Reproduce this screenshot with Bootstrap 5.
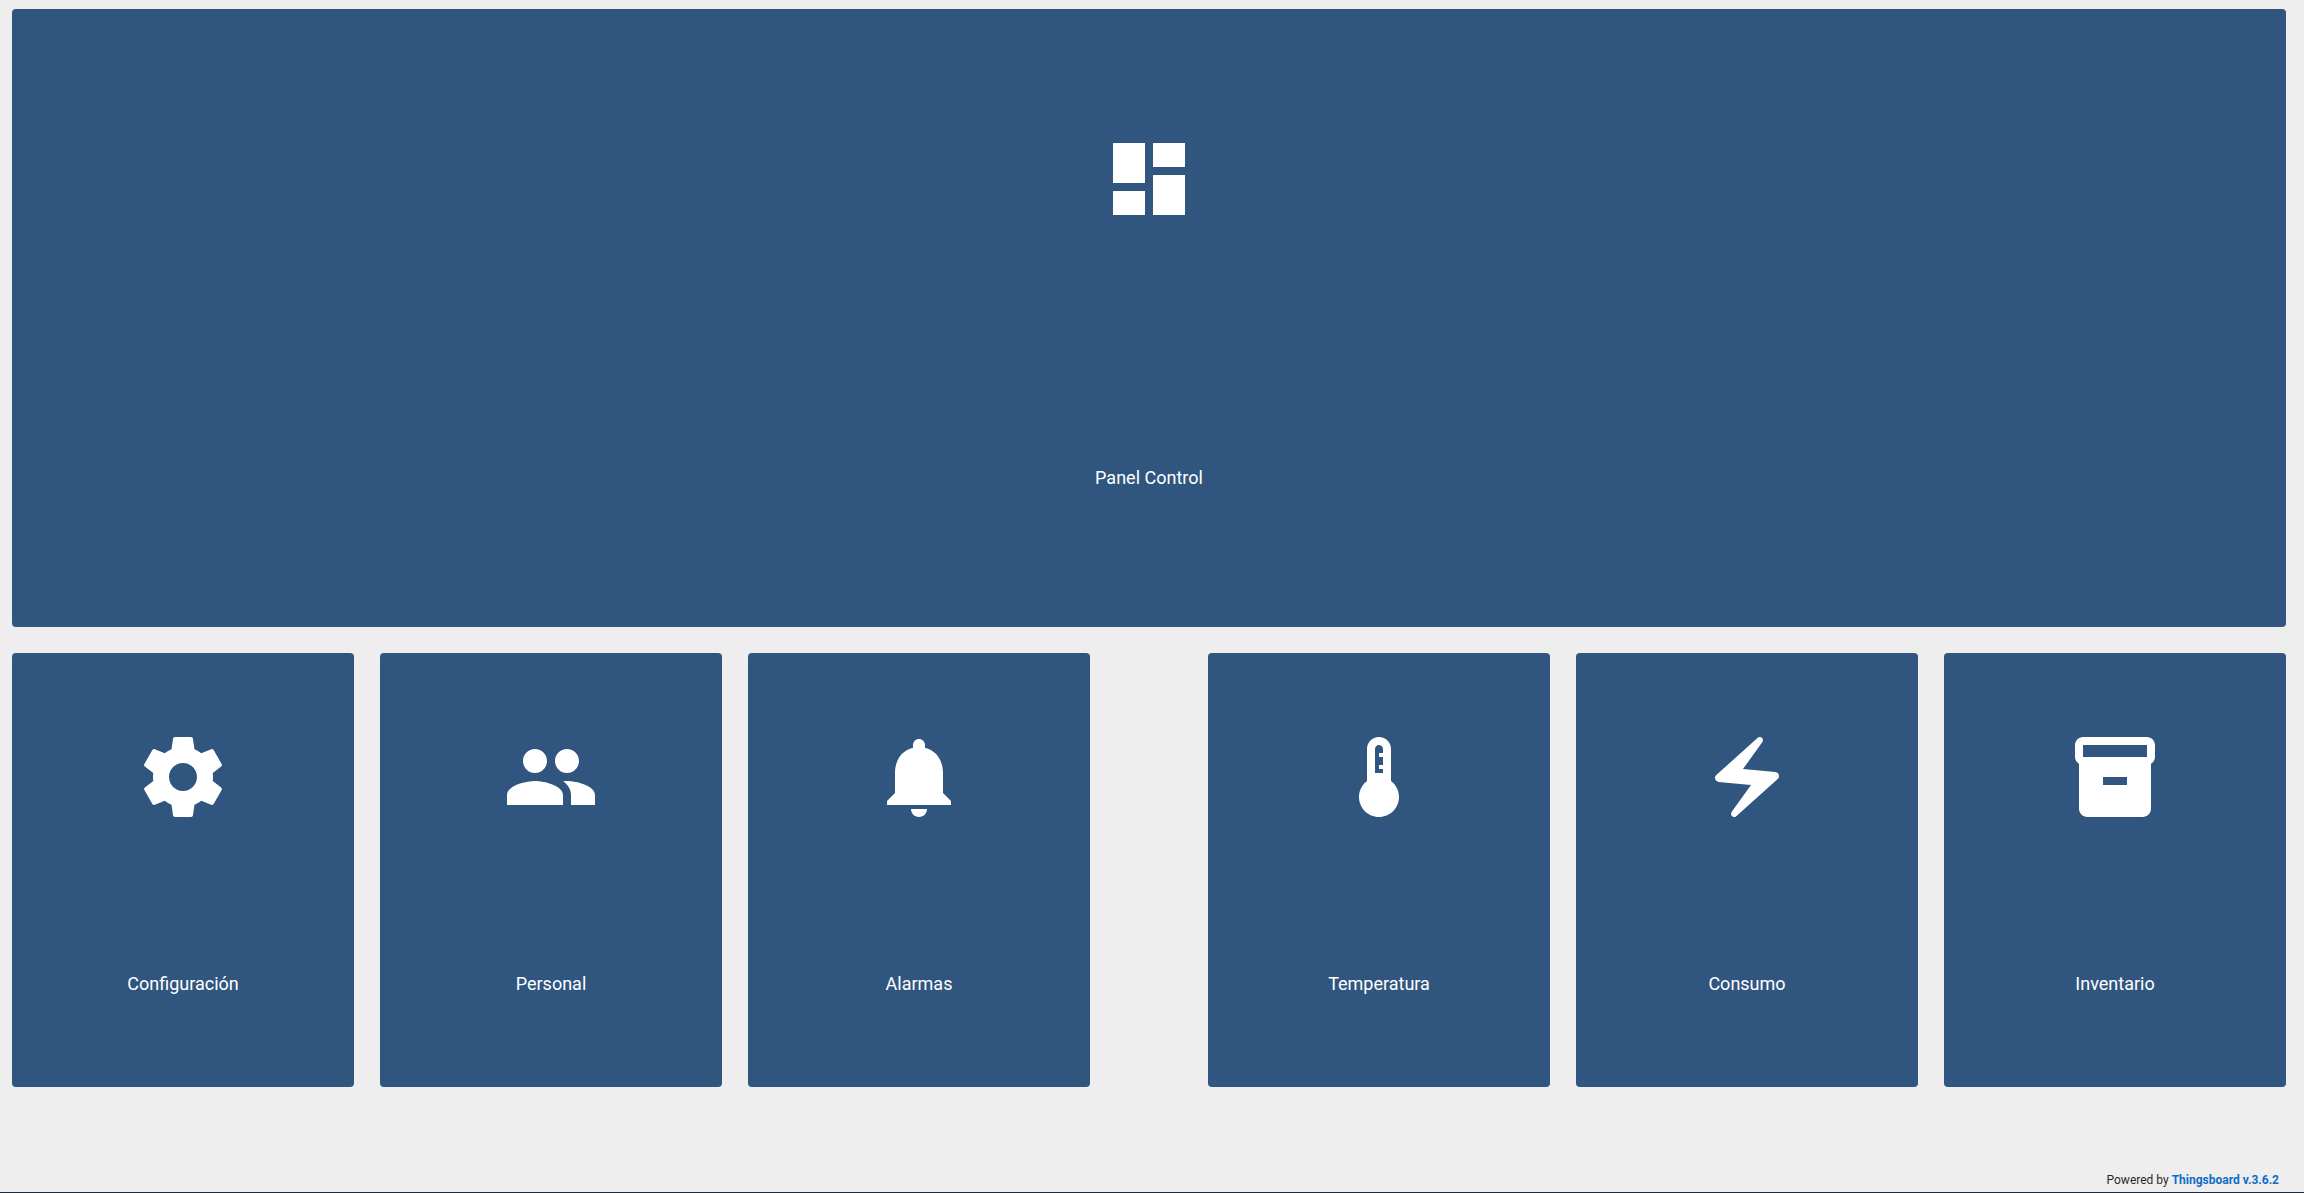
<!DOCTYPE html>
<html lang="es">
<head>
<meta charset="utf-8">
<meta name="viewport" content="width=device-width, initial-scale=1">
<title>Panel Control</title>
<link href="https://cdn.jsdelivr.net/npm/bootstrap@5.3.0/dist/css/bootstrap.min.css" rel="stylesheet">
<style>
  body { background: #eee; font-family: Roboto, "Liberation Sans", sans-serif; }
  .dash-page { border-bottom: 1px solid #1c2b3f; }
  .dash-grid {
    display: grid;
    grid-template-columns: repeat(25, minmax(0, 1fr));
    grid-auto-rows: 66px;
    gap: 26px;
    padding: 9px 18px 9px 12px;
  }
  .tile-wide { grid-column: 1 / -1; grid-row: span 7; }
  .tile-nav { grid-column: span 4; grid-row: span 5; }
  .tile-after-gap { grid-column: 14 / span 4; }
  .nav-tile {
    --bs-btn-color: #fff;
    --bs-btn-bg: #305680;
    --bs-btn-border-width: 0;
    --bs-btn-border-radius: 4px;
    --bs-btn-padding-x: 10px;
    --bs-btn-padding-y: 10px;
    --bs-btn-font-size: 18px;
    --bs-btn-line-height: 54px;
    --bs-btn-hover-color: #fff;
    --bs-btn-hover-bg: #3a628e;
    --bs-btn-active-color: #fff;
    --bs-btn-active-bg: #294b70;
  }
  .nav-tile svg { width: 96px; height: 96px; fill: currentColor; }
  .dash-footer { font-size: 12px; line-height: 16px; padding: 0 25px 4px 0; color: rgba(0, 0, 0, .87); }
  .dash-footer a { color: #106cc8; }
  @media (max-width: 1000px) {
    .tile-nav, .tile-after-gap { grid-column: 1 / -1; }
  }
</style>
<script src="https://cdn.jsdelivr.net/npm/bootstrap@5.3.0/dist/js/bootstrap.bundle.min.js"></script>
</head>
<body>
<div class="dash-page min-vh-100 d-flex flex-column">
  <main class="dash-grid">
    <button type="button" class="btn nav-tile tile-wide d-flex flex-column align-items-center justify-content-around">
      <svg viewBox="0 0 24 24" aria-hidden="true"><path d="M3 13h8V3H3v10zm0 8h8v-6H3v6zm10 0h8V11h-8v10zm0-18v6h8V3h-8z"/></svg>
      <span>Panel Control</span>
    </button>
    <button type="button" class="btn nav-tile tile-nav d-flex flex-column align-items-center justify-content-around">
      <svg viewBox="0 0 24 24" aria-hidden="true"><path d="M19.43 12.98c.04-.32.07-.64.07-.98s-.03-.66-.07-.98l2.11-1.65c.19-.15.24-.42.12-.64l-2-3.46c-.12-.22-.39-.3-.61-.22l-2.49 1c-.52-.4-1.08-.73-1.69-.98l-.38-2.65C14.46 2.18 14.25 2 14 2h-4c-.25 0-.46.18-.49.42l-.38 2.65c-.61.25-1.17.59-1.69.98l-2.49-1c-.23-.09-.49 0-.61.22l-2 3.46c-.13.22-.07.49.12.64l2.11 1.65c-.04.32-.07.65-.07.98s.03.66.07.98l-2.11 1.65c-.19.15-.24.42-.12.64l2 3.46c.12.22.39.3.61.22l2.49-1c.52.4 1.08.73 1.69.98l.38 2.65c.03.24.24.42.49.42h4c.25 0 .46-.18.49-.42l.38-2.65c.61-.25 1.17-.59 1.69-.98l2.49 1c.23.09.49 0 .61-.22l2-3.46c.12-.22.07-.49-.12-.64l-2.11-1.65zM12 15.5c-1.93 0-3.5-1.57-3.5-3.5s1.57-3.5 3.5-3.5 3.5 1.57 3.5 3.5-1.57 3.5-3.5 3.5z"/></svg>
      <span>Configuración</span>
    </button>
    <button type="button" class="btn nav-tile tile-nav d-flex flex-column align-items-center justify-content-around">
      <svg viewBox="0 0 24 24" aria-hidden="true"><path d="M16 11c1.66 0 2.99-1.34 2.99-3S17.66 5 16 5c-1.66 0-3 1.34-3 3s1.34 3 3 3zm-8 0c1.66 0 2.99-1.34 2.99-3S9.66 5 8 5C6.34 5 5 6.34 5 8s1.34 3 3 3zm0 2c-2.33 0-7 1.17-7 3.5V19h14v-2.5c0-2.33-4.67-3.5-7-3.5zm8 0c-.29 0-.62.02-.97.05 1.16.84 1.97 1.97 1.97 3.45V19h6v-2.5c0-2.33-4.67-3.5-7-3.5z"/></svg>
      <span>Personal</span>
    </button>
    <button type="button" class="btn nav-tile tile-nav d-flex flex-column align-items-center justify-content-around">
      <svg viewBox="0 0 24 24" aria-hidden="true"><path d="M12 22c1.1 0 2-.9 2-2h-4c0 1.1.89 2 2 2zm6-6v-5c0-3.07-1.64-5.64-4.5-6.32V4c0-.83-.67-1.5-1.5-1.5s-1.5.67-1.5 1.5v.68C7.63 5.36 6 7.92 6 11v5l-2 2v1h16v-1l-2-2z"/></svg>
      <span>Alarmas</span>
    </button>
    <button type="button" class="btn nav-tile tile-nav tile-after-gap d-flex flex-column align-items-center justify-content-around">
      <svg viewBox="0 0 24 24" aria-hidden="true"><path d="M15 13V5c0-1.66-1.34-3-3-3S9 3.34 9 5v8c-1.21.91-2 2.37-2 4 0 2.76 2.24 5 5 5s5-2.24 5-5c0-1.63-.79-3.09-2-4zm-4-8c0-.55.45-1 1-1s1 .45 1 1v1h-1v1h1v2h-1v1h1v1h-2V5z"/></svg>
      <span>Temperatura</span>
    </button>
    <button type="button" class="btn nav-tile tile-nav d-flex flex-column align-items-center justify-content-around">
      <svg viewBox="0 0 24 24" aria-hidden="true"><path d="M14.69 2.21L4.33 11.49c-.64.58-.28 1.65.58 1.73L13 14l-4.85 6.76c-.22.31-.19.74.08 1.01.3.3.77.31 1.08.02l10.36-9.28c.64-.58.28-1.65-.58-1.73L11 10l4.85-6.76c.22-.31.19-.74-.08-1.01-.3-.3-.77-.31-1.08-.02z"/></svg>
      <span>Consumo</span>
    </button>
    <button type="button" class="btn nav-tile tile-nav d-flex flex-column align-items-center justify-content-around">
      <svg viewBox="0 0 24 24" aria-hidden="true"><path d="M20 2H4c-1 0-2 .9-2 2v3.01c0 .72.43 1.34 1 1.69V20c0 1.1 1.1 2 2 2h14c.9 0 2-.9 2-2V8.7c.57-.35 1-.97 1-1.69V4c0-1.1-1-2-2-2zm-5 12H9v-2h6v2zm5-7H4V4h16v3z"/></svg>
      <span>Inventario</span>
    </button>
  </main>
  <footer class="dash-footer mt-auto text-end">Powered by <a href="#" class="fw-bold text-decoration-none">Thingsboard v.3.6.2</a></footer>
</div>
</body>
</html>
